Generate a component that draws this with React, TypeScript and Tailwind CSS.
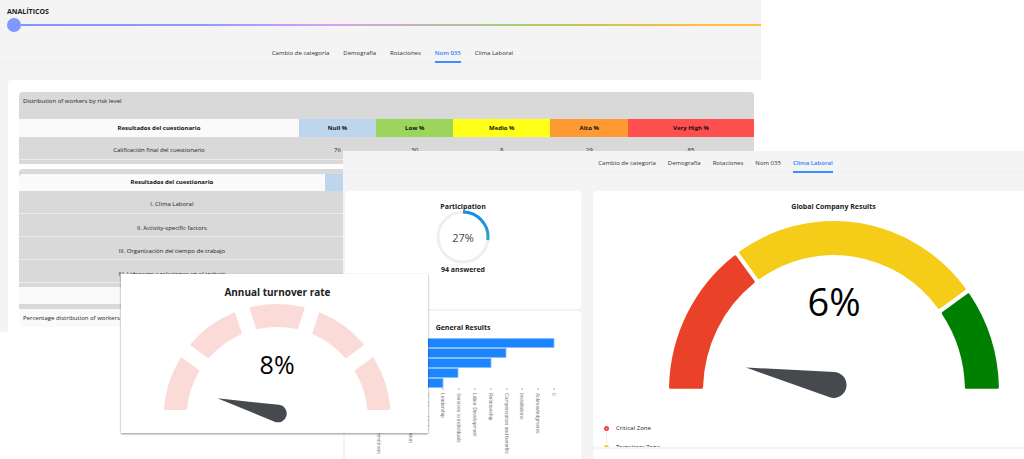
import { useState } from "react";

const TABS = ["Cambio de categoría", "Demografía", "Rotaciones", "Nom 035", "Clima Laboral"];

function Tabs({ initial, className }: { initial: string; className: string }) {
  const [active, setActive] = useState(initial);
  return (
    <div role="tablist" className={`flex justify-center border-b border-[#efefef] ${className}`}>
      {TABS.map((tab) => (
        <button
          key={tab}
          type="button"
          role="tab"
          aria-selected={tab === active}
          onClick={() => setActive(tab)}
          className={
            tab === active
              ? "-mb-px whitespace-nowrap border-b-2 border-[#3b8fff] pb-[3px] font-semibold text-[#1f80ff]"
              : "-mb-px whitespace-nowrap border-b-2 border-transparent pb-[3px] text-[#333]"
          }
        >
          {tab}
        </button>
      ))}
    </div>
  );
}

type Segment = { from: number; to: number; color: string };
type GaugeProps = {
  cx: number;
  cy: number;
  rx: number;
  ry: number;
  thickness: number;
  pad: number;
  segments: Segment[];
};

/* Rounded corners come from a round-joined stroke, so each outline is inset by half of it. */
function GaugeArcs({ cx, cy, rx, ry, thickness, pad, segments }: GaugeProps) {
  const inset = 1.5;
  const point = (a: number, x: number, y: number) =>
    `${(cx - x * Math.cos(a)).toFixed(2)} ${(cy - y * Math.sin(a)).toFixed(2)}`;
  return (
    <>
      {segments.map(({ from, to, color }) => {
        const ox = rx - inset;
        const oy = ry - inset;
        const ix = rx - thickness + inset;
        const iy = ry - thickness + inset;
        const outer = (pad + inset) / ox;
        const inner = (pad + inset) / ix;
        const a = from * Math.PI;
        const b = to * Math.PI;
        const d = [
          `M${point(a + outer, ox, oy)}`,
          `A${ox} ${oy} 0 0 1 ${point(b - outer, ox, oy)}`,
          `L${point(b - inner, ix, iy)}`,
          `A${ix} ${iy} 0 0 0 ${point(a + inner, ix, iy)}Z`,
        ].join("");
        return (
          <path key={from} d={d} fill={color} stroke={color} strokeWidth={inset * 2} strokeLinejoin="round" />
        );
      })}
    </>
  );
}

const RISK = [
  { label: "Null %", value: 76, head: "w-[10.5%] bg-[#bdd5ed]" },
  { label: "Low %", value: 30, head: "w-[10.5%] bg-[#9bd55c]" },
  { label: "Medio %", value: 8, head: "w-[13.2%] bg-[#ffff17]" },
  { label: "Alto %", value: 29, head: "w-[10.6%] bg-[#ff9933]" },
  { label: "Very High %", value: 85, head: "w-[17.1%] bg-[#ff4f4f]" },
];

const CATEGORIES = [
  "I. Clima Laboral",
  "II. Activity-specific factors",
  "III. Organización del tiempo de trabajo",
  "IV. Liderazgo y relaciones en el trabajo",
];

function RiskWindow() {
  return (
    <section className="absolute left-0 top-0 w-[74.3%] overflow-hidden bg-[#f4f4f4]">
      <h1 className="pl-[7px] pt-1.5 text-[7px] font-bold leading-[11px] text-[#222]">ANALÍTICOS</h1>
      <div className="ml-[7px] mt-px flex items-center">
        <span className="size-3.5 rounded-full bg-[#8097ff]" />
        <span className="h-0.5 grow bg-[linear-gradient(90deg,#8097ff_0%,#8f9cff_25%,#dd9ff0_42%,#a8cb80_66%,#c6c750_76%,#ffbf3f_92%)]" />
      </div>
      <Tabs initial="Nom 035" className="mt-[17px] gap-3.5 pl-6 text-[6px] leading-[9px]" />
      <div className="ml-2 mt-[17px] rounded-tl bg-white pb-[5px] pl-[11px] pr-[7px] pt-3 text-[6px] leading-[9px] text-[#222]">
        <div className="rounded-t bg-[#d9d9d9] pb-1">
          <h2 className="h-[27px] pl-1 pt-[5px]">Distribution of workers by risk level</h2>
          <table className="w-full table-fixed border-collapse text-center">
            <thead>
              <tr className="h-[18px] text-[#111]">
                <th className="w-[38.1%] bg-[#fafafa] font-bold">Resultados del cuestionario</th>
                {RISK.map((r) => (
                  <th key={r.label} className={`font-bold ${r.head}`}>
                    {r.label}
                  </th>
                ))}
              </tr>
            </thead>
            <tbody>
              <tr className="h-[22px] border-b border-[#ececec]">
                <td className="pt-1.5">Calificación final del cuestionario</td>
                {RISK.map((r) => (
                  <td key={r.label} className="pt-1.5">
                    {r.value}
                  </td>
                ))}
              </tr>
            </tbody>
          </table>
        </div>
        <div className="mt-[5px] rounded-t bg-[#d9d9d9] pb-[5px] pt-[5px]">
          <table className="w-full table-fixed border-collapse text-center">
            <thead>
              <tr className="h-[17px] text-[#111]">
                <th className="w-[41.6%] rounded-tl bg-[#fafafa] font-bold">Resultados del cuestionario</th>
                <td className="bg-[#bdd5ed]" />
              </tr>
            </thead>
            <tbody>
              {CATEGORIES.map((c) => (
                <tr key={c} className="h-[23px] border-b border-[#ececec]">
                  <td className="pt-1.5">{c}</td>
                  <td />
                </tr>
              ))}
            </tbody>
          </table>
          <div className="mt-1 h-[17px] bg-[#fafafa]" />
        </div>
        <h2 className="h-[18px] rounded-b bg-[#fafafa] pl-1 pt-[5px]">Percentage distribution of workers by category</h2>
      </div>
    </section>
  );
}

const BARS = [209, 161, 146, 113, 98];

const AXIS = [
  { x: 98, label: "Leadership" },
  { x: 114, label: "Services to individuals" },
  { x: 130, label: "Labor Development" },
  { x: 146, label: "Relationship" },
  { x: 162, label: "Compensation and benefits" },
  { x: 177, label: "Installations" },
  { x: 193, label: "Acknowledgments" },
  { x: 209, label: "0" },
  { x: 82, label: "Health and Safety" },
  { x: 66, label: "Mission, values, vision" },
  { x: 34, label: "Organizational commitment" },
];

function ResultsChart() {
  return (
    <svg viewBox="0 0 236 125" className="mt-1.5 w-full shrink-0" role="img" aria-label="General Results">
      {BARS.map((end, i) => (
        <rect key={end} x={18} y={i * 10 + 0.5} width={end - 18} height={9} fill="#1c86ff" stroke="#86bcff" strokeWidth={0.8} />
      ))}
      {AXIS.map(({ x, label }) => (
        <g key={x}>
          <path d={`M${x} 50v2`} stroke="#999" strokeWidth={0.8} />
          <text transform={`translate(${x - 2} 55) rotate(90)`} className="fill-[#777] font-['Liberation_Sans',sans-serif] text-[5px]">
            {label}
          </text>
        </g>
      ))}
    </svg>
  );
}

function ClimateWindow() {
  return (
    <section className="absolute bottom-0 left-[33.5%] right-0 top-[151px] flex flex-col overflow-hidden bg-[#f4f4f4]">
      <Tabs initial="Clima Laboral" className="gap-3 pl-16 pt-2 text-[6px] leading-[9px]" />
      <div className="mt-[18px] flex min-h-0 grow gap-3 pl-0.5">
        <div className="flex w-[236px] flex-col gap-0.5 text-[7px] leading-[9px] text-[#222]">
          <article className="flex h-[118px] shrink-0 flex-col items-center rounded bg-white pt-[11px]">
            <h2 className="font-bold">Participation</h2>
            <svg viewBox="0 0 54 54" className="-mt-px size-[54px]" role="img" aria-label="27%">
              <defs>
                <linearGradient id="ring" x1="0" y1="0" x2="0" y2="1">
                  <stop offset="0" stopColor="#108ee9" />
                  <stop offset="1" stopColor="#2ca0cc" />
                </linearGradient>
              </defs>
              <circle cx="27" cy="27" r="25" fill="none" stroke="#efefef" strokeWidth="3" />
              <path d="M27 2A25 25 0 0 1 51.8 30.1" fill="none" stroke="url(#ring)" strokeWidth="3" />
              <text x="27" y="32" textAnchor="middle" className="fill-[#444] text-[11px]">
                27%
              </text>
            </svg>
            <p className="mt-px font-bold">94 answered</p>
          </article>
          <article className="flex min-h-0 grow flex-col items-center overflow-hidden rounded-t bg-white pt-3">
            <h2 className="font-bold">General Results</h2>
            <ResultsChart />
          </article>
        </div>
        <div className="flex min-w-0 grow flex-col">
          <article className="h-64 shrink-0 overflow-hidden rounded-l bg-white pt-[11px] text-[#222]">
            <h2 className="pl-[50px] text-center text-[7px] font-bold leading-[9px]">Global Company Results</h2>
            <svg viewBox="0 0 431 180" className="w-full overflow-visible" role="img" aria-label="Global Company Results: 6%">
              <GaugeArcs
                cx={241}
                cy={180}
                rx={165}
                ry={170}
                thickness={34}
                pad={2}
                segments={[
                  { from: 0, to: 0.3, color: "#ea4228" },
                  { from: 0.3, to: 0.8, color: "#f5cd19" },
                  { from: 0.8, to: 1, color: "#008000" },
                ]}
              />
              <path d="M153 156.500L241.500 161A13 13 0 1 1 237.500 186.600Z" fill="#464a4f" />
              <text x="241" y="105" textAnchor="middle" className="fill-black text-[38px]">
                6%
              </text>
            </svg>
            <ul className="ml-[11px] mt-[33px] text-[6px] leading-[9px] text-[#222]">
              <li className="relative flex h-[19px] items-start gap-[7px]">
                <span className="mt-0.5 size-[5px] rounded-full border-2 border-[#f5424d]" />
                <span className="absolute bottom-0 left-0.5 top-2 w-px bg-[#ececec]" />
                Critical Zone
              </li>
              <li className="flex items-start gap-[7px]">
                <span className="mt-0.5 size-[5px] rounded-full border-2 border-[#f5cd19]" />
                Transitory Zone
              </li>
            </ul>
          </article>
          <div className="mt-0.5 grow rounded-tl bg-white" />
        </div>
      </div>
    </section>
  );
}

function TurnoverWindow() {
  return (
    <section className="absolute left-[11.8%] top-[274px] w-[30%] bg-white pt-3 shadow-[0_1px_2px_rgba(0,0,0,0.45)]">
      <h2 className="pl-1.5 text-center text-[10px] font-bold leading-[13px] text-[#222]">Annual turnover rate</h2>
      <svg viewBox="0 0 307 134" className="w-full" role="img" aria-label="Annual turnover rate: 8%">
        <GaugeArcs
          cx={156}
          cy={118.5}
          rx={113.5}
          ry={113.5}
          thickness={23}
          pad={7.5}
          segments={[0, 1, 2, 3, 4].map((i) => ({ from: i / 5, to: (i + 1) / 5, color: "#fadbd8" }))}
        />
        <path d="M96.300 99.300L157.700 105.700A8.800 8.800 0 1 1 153.500 122.600Z" fill="#464a4f" />
        <text x="156" y="75" textAnchor="middle" className="fill-black text-[25px]">
          8%
        </text>
      </svg>
    </section>
  );
}

export default function App() {
  return (
    <main className="relative min-h-screen overflow-hidden bg-white font-['Open_Sans','Noto_Sans',sans-serif]">
      <RiskWindow />
      <ClimateWindow />
      <TurnoverWindow />
    </main>
  );
}
